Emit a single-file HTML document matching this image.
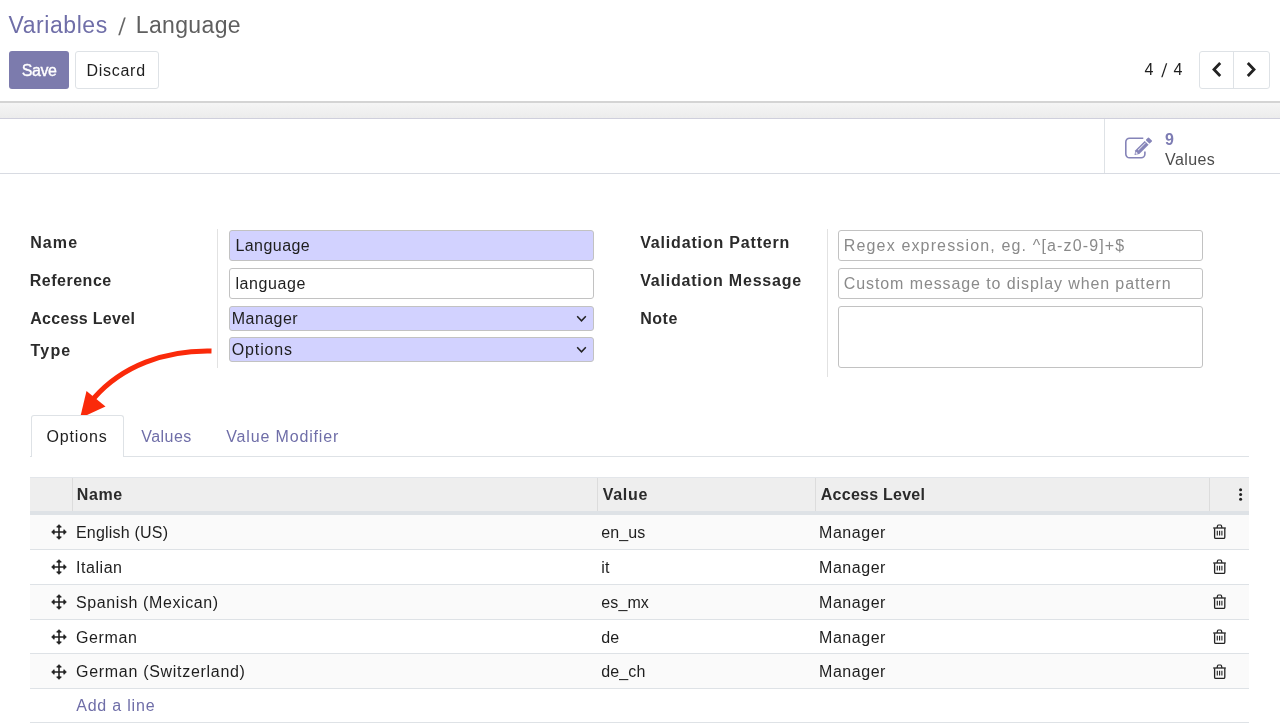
<!DOCTYPE html>
<html><head><meta charset="utf-8">
<style>
html,body{margin:0;padding:0;background:#fff;}
body{width:1280px;height:723px;position:relative;overflow:hidden;font-family:"Liberation Sans",sans-serif;}
.t{position:absolute;white-space:nowrap;}
#root{position:absolute;left:0;top:0;width:1280px;height:723px;will-change:transform;}
.b{position:absolute;}
</style></head><body>
<div id="root">
<div class="t" style="left:8.6px;top:13.83px;font-size:23px;line-height:23px;font-weight:normal;color:#6f6ea8;letter-spacing:0.55px;">Variables</div>
<div class="t" style="left:118.3px;top:16.78px;font-size:22px;line-height:22px;font-weight:normal;color:#666;letter-spacing:0px;transform:scaleY(1.1) skewX(-5deg);transform-origin:50% 100%;">/</div>
<div class="t" style="left:135.8px;top:13.83px;font-size:23px;line-height:23px;font-weight:normal;color:#5f5f5f;letter-spacing:0.35px;">Language</div>
<div class="b" style="left:9px;top:51px;width:60px;height:38px;background:#7C7BAD;border-radius:3px;"></div>
<div class="t" style="left:21.7px;top:63.36px;font-size:16px;line-height:16px;font-weight:normal;color:#fff;letter-spacing:-0.4px;-webkit-text-stroke:0.35px #fff;">Save</div>
<div class="b" style="left:75px;top:51px;width:84px;height:38px;background:#fff;border:1px solid #dee2e6;border-radius:3px;box-sizing:border-box;"></div>
<div class="t" style="left:86.6px;top:62.56px;font-size:16px;line-height:16px;font-weight:normal;color:#1e1e1e;letter-spacing:0.7px;">Discard</div>
<div class="t" style="left:1144.5px;top:62.21px;font-size:16px;line-height:16px;font-weight:normal;color:#1e1e1e;letter-spacing:0px;">4</div>
<div class="t" style="left:1160.5px;top:62.51px;font-size:17px;line-height:17px;font-weight:normal;color:#1e1e1e;letter-spacing:0px;transform:scaleY(1.12) skewX(-6deg);transform-origin:50% 100%;">/</div>
<div class="t" style="left:1173.6px;top:62.21px;font-size:16px;line-height:16px;font-weight:normal;color:#1e1e1e;letter-spacing:0px;">4</div>
<div class="b" style="left:1198.5px;top:51px;width:71px;height:38px;background:#fff;border:1px solid #dee2e6;border-radius:3px;box-sizing:border-box;"></div>
<div class="b" style="left:1233px;top:51px;width:1px;height:38px;background:#dee2e6;"></div>
<svg class="b" style="left:1210px;top:61px" width="14" height="17" viewBox="0 0 14 17"><path d="M10.2 2 L4 8.5 L10.2 15" fill="none" stroke="#222" stroke-width="2.8" stroke-linecap="butt" stroke-linejoin="miter"/></svg>
<svg class="b" style="left:1244px;top:61px" width="14" height="17" viewBox="0 0 14 17"><path d="M3.8 2 L10 8.5 L3.8 15" fill="none" stroke="#222" stroke-width="2.8" stroke-linecap="butt" stroke-linejoin="miter"/></svg>
<div class="b" style="left:0px;top:101px;width:1280px;height:2px;background:#d4d4d4;"></div>
<div class="b" style="left:0px;top:103px;width:1280px;height:15px;background:linear-gradient(#f5f5f5,#ececec);"></div>
<div class="b" style="left:0px;top:118px;width:1280px;height:1px;background:#cfcfdc;"></div>
<div class="b" style="left:0px;top:173px;width:1280px;height:1px;background:#d8dbe2;"></div>
<div class="b" style="left:1104px;top:119px;width:1px;height:54px;background:#dee2e6;"></div>
<svg class="b" style="left:1120px;top:130px" width="40" height="35" viewBox="0 0 40 35">
<path d="M23.3 8.2 H9.5 A3.7 3.7 0 0 0 5.8 11.9 V24.1 A3.7 3.7 0 0 0 9.5 27.8 H21.2 A3.7 3.7 0 0 0 24.9 24.1 V21.6" fill="none" stroke="#8584b8" stroke-width="1.6"/>
<g transform="translate(14.5 25) rotate(-45)">
<path d="M0 0 L4 -2.75 H17.2 V2.75 H4 Z" fill="#8584b8"/>
<rect x="18.5" y="-2.75" width="4" height="5.5" rx="0.7" fill="#8584b8"/>
<rect x="6" y="-1.3" width="10.5" height="0.8" fill="#fff" opacity="0.8"/>
<path d="M1.8 -0.9 L3.6 -0.9 L3.6 1.1 L1.8 1.1Z" fill="#fff" opacity="0.8"/>
</g></svg>
<div class="t" style="left:1165px;top:131.66px;font-size:16px;line-height:16px;font-weight:bold;color:#7d7cb3;letter-spacing:0px;">9</div>
<div class="t" style="left:1165px;top:152.06px;font-size:16px;line-height:16px;font-weight:normal;color:#4c4c4c;letter-spacing:0.4px;">Values</div>
<div class="t" style="left:30.2px;top:234.71px;font-size:16px;line-height:16px;font-weight:bold;color:#2b2b2b;letter-spacing:1.1px;">Name</div>
<div class="t" style="left:29.8px;top:273.46px;font-size:16px;line-height:16px;font-weight:bold;color:#2b2b2b;letter-spacing:0.5px;">Reference</div>
<div class="t" style="left:30.2px;top:310.71px;font-size:16px;line-height:16px;font-weight:bold;color:#2b2b2b;letter-spacing:0.3px;">Access Level</div>
<div class="t" style="left:30.5px;top:343.06px;font-size:16px;line-height:16px;font-weight:bold;color:#2b2b2b;letter-spacing:1.2px;">Type</div>
<div class="b" style="left:217px;top:229px;width:1px;height:139px;background:#e2e2e2;"></div>
<div class="b" style="left:827px;top:229px;width:1px;height:148px;background:#e2e2e2;"></div>
<div class="b" style="left:229px;top:230px;width:365px;height:31px;background:#d2d2ff;border:1px solid #c2c2c2;border-radius:3px;box-sizing:border-box;"></div>
<div class="t" style="left:235.4px;top:238.16px;font-size:16px;line-height:16px;font-weight:normal;color:#1e1e1e;letter-spacing:0.45px;">Language</div>
<div class="b" style="left:229px;top:268px;width:365px;height:31px;background:#fff;border:1px solid #c2c2c2;border-radius:3px;box-sizing:border-box;"></div>
<div class="t" style="left:235.4px;top:276.16px;font-size:16px;line-height:16px;font-weight:normal;color:#1e1e1e;letter-spacing:0.6px;">language</div>
<div class="b" style="left:229px;top:306px;width:365px;height:24.5px;background:#d2d2ff;border:1px solid #c2c2c2;border-radius:3px;box-sizing:border-box;"></div>
<div class="t" style="left:231.8px;top:311.16px;font-size:16px;line-height:16px;font-weight:normal;color:#1e1e1e;letter-spacing:0.45px;">Manager</div>
<div class="b" style="left:229px;top:337px;width:365px;height:24.5px;background:#d2d2ff;border:1px solid #c2c2c2;border-radius:3px;box-sizing:border-box;"></div>
<div class="t" style="left:231.8px;top:342.26px;font-size:16px;line-height:16px;font-weight:normal;color:#1e1e1e;letter-spacing:0.85px;">Options</div>
<svg class="b" style="left:576px;top:315px" width="11" height="8" viewBox="0 0 11 8"><path d="M1.2 1.2 L5.5 5.8 L9.8 1.2" fill="none" stroke="#222" stroke-width="1.5"/></svg>
<svg class="b" style="left:576px;top:346px" width="11" height="8" viewBox="0 0 11 8"><path d="M1.2 1.2 L5.5 5.8 L9.8 1.2" fill="none" stroke="#222" stroke-width="1.5"/></svg>
<div class="t" style="left:640.25px;top:234.56px;font-size:16px;line-height:16px;font-weight:bold;color:#2b2b2b;letter-spacing:0.82px;">Validation Pattern</div>
<div class="t" style="left:640.25px;top:273.06px;font-size:16px;line-height:16px;font-weight:bold;color:#2b2b2b;letter-spacing:0.78px;">Validation Message</div>
<div class="t" style="left:640.25px;top:311.46px;font-size:16px;line-height:16px;font-weight:bold;color:#2b2b2b;letter-spacing:0.5px;">Note</div>
<div class="b" style="left:838px;top:229.5px;width:365px;height:31px;background:#fff;border:1px solid #c2c2c2;border-radius:3px;box-sizing:border-box;"></div>
<div class="t" style="left:843.8px;top:238.16px;font-size:16px;line-height:16px;font-weight:normal;color:#8a8a8a;letter-spacing:1.15px;">Regex expression, eg. ^[a-z0-9]+$</div>
<div class="b" style="left:838px;top:268px;width:365px;height:31px;background:#fff;border:1px solid #c2c2c2;border-radius:3px;box-sizing:border-box;"></div>
<div class="t" style="left:843.8px;top:276.16px;font-size:16px;line-height:16px;font-weight:normal;color:#8a8a8a;letter-spacing:0.9px;">Custom message to display when pattern</div>
<div class="b" style="left:838px;top:306px;width:365px;height:62px;background:#fff;border:1px solid #c2c2c2;border-radius:3px;box-sizing:border-box;"></div>
<svg class="b" style="left:0;top:0" width="300" height="460" viewBox="0 0 300 460">
<path d="M211.5 351 C165 350 122 366 94 398" fill="none" stroke="#fa2a0a" stroke-width="5"/>
<path d="M80 418.3 L86.5 391 L105.5 406.5 Z" fill="#fa2a0a"/>
</svg>
<div class="b" style="left:30px;top:456px;width:1219px;height:1px;background:#dee2e6;"></div>
<div class="b" style="left:30.5px;top:415px;width:93.5px;height:42px;background:#fff;border:1px solid #dee2e6;border-bottom:none;border-radius:3px 3px 0 0;box-sizing:border-box;"></div>
<div class="t" style="left:46.5px;top:428.86px;font-size:16px;line-height:16px;font-weight:normal;color:#1e1e1e;letter-spacing:0.85px;">Options</div>
<div class="t" style="left:141.3px;top:428.76px;font-size:16px;line-height:16px;font-weight:normal;color:#6f6ea8;letter-spacing:0.45px;">Values</div>
<div class="t" style="left:226.2px;top:428.76px;font-size:16px;line-height:16px;font-weight:normal;color:#6f6ea8;letter-spacing:0.85px;">Value Modifier</div>
<div class="b" style="left:30px;top:477px;width:1219px;height:34px;background:#eeeeee;border-top:1px solid #e3e6ea;box-sizing:border-box;"></div>
<div class="b" style="left:30px;top:511px;width:1219px;height:4px;background:#dee2e6;"></div>
<div class="b" style="left:71.5px;top:478px;width:1px;height:33px;background:#dcdcdc;"></div>
<div class="b" style="left:596.5px;top:478px;width:1px;height:33px;background:#dcdcdc;"></div>
<div class="b" style="left:814.5px;top:478px;width:1px;height:33px;background:#dcdcdc;"></div>
<div class="b" style="left:1209px;top:478px;width:1px;height:33px;background:#dcdcdc;"></div>
<div class="t" style="left:76.7px;top:486.86px;font-size:16px;line-height:16px;font-weight:bold;color:#2b2b2b;letter-spacing:0.65px;">Name</div>
<div class="t" style="left:602.7px;top:486.86px;font-size:16px;line-height:16px;font-weight:bold;color:#2b2b2b;letter-spacing:0.7px;">Value</div>
<div class="t" style="left:820.8px;top:486.86px;font-size:16px;line-height:16px;font-weight:bold;color:#2b2b2b;letter-spacing:0.25px;">Access Level</div>
<svg class="b" style="left:1237px;top:487px" width="8" height="16" viewBox="0 0 8 16"><circle cx="3.6" cy="2.8" r="1.5" fill="#222"/><circle cx="3.6" cy="7.6" r="1.5" fill="#222"/><circle cx="3.6" cy="12.3" r="1.5" fill="#222"/></svg>
<div class="b" style="left:30px;top:515px;width:1219px;height:34px;background:#fafafa;"></div>
<div class="b" style="left:30px;top:549px;width:1219px;height:1px;background:#dee2e6;"></div>
<div class="t" style="left:76px;top:525.26px;font-size:16px;line-height:16px;font-weight:normal;color:#1e1e1e;letter-spacing:0.2px;">English (US)</div>
<div class="t" style="left:601.3px;top:525.26px;font-size:16px;line-height:16px;font-weight:normal;color:#1e1e1e;letter-spacing:0.1px;">en_us</div>
<div class="t" style="left:819px;top:525.26px;font-size:16px;line-height:16px;font-weight:normal;color:#1e1e1e;letter-spacing:0.55px;">Manager</div>
<svg class="b" style="left:49px;top:522.40px" width="20" height="20" viewBox="-10 -10 20 20">
<path d="M0 -6 V6 M-6 0 H6" stroke="#222" stroke-width="1.6"/>
<path d="M0 -7.3 L-2.3 -4.9 H2.3Z M0 7.3 L-2.3 4.9 H2.3Z M-7.3 0 L-4.9 -2.3 V2.3Z M7.3 0 L4.9 -2.3 V2.3Z" fill="#222" stroke="#222" stroke-width="1" stroke-linejoin="round"/>
</svg>
<svg class="b" style="left:1210px;top:522.40px" width="20" height="20" viewBox="0 0 20 20">
<path d="M3.2 6 H15.8" stroke="#222" stroke-width="1.3"/>
<path d="M7 6 L7.6 3.7 Q7.8 3 8.6 3 H10.4 Q11.2 3 11.4 3.7 L12 6" fill="none" stroke="#222" stroke-width="1.2"/>
<path d="M4.6 6.3 V15.2 Q4.6 16.4 5.8 16.4 H13.6 Q14.8 16.4 14.8 15.2 V6.3" fill="none" stroke="#222" stroke-width="1.3"/>
<path d="M7.3 8.7 V13.6 M9.6 8.7 V13.6 M11.9 8.7 V13.6" stroke="#222" stroke-width="1.1"/>
</svg>
<div class="b" style="left:30px;top:550px;width:1219px;height:34px;background:#ffffff;"></div>
<div class="b" style="left:30px;top:584px;width:1219px;height:1px;background:#dee2e6;"></div>
<div class="t" style="left:76px;top:560.06px;font-size:16px;line-height:16px;font-weight:normal;color:#1e1e1e;letter-spacing:0.55px;">Italian</div>
<div class="t" style="left:601.3px;top:560.06px;font-size:16px;line-height:16px;font-weight:normal;color:#1e1e1e;letter-spacing:0.1px;">it</div>
<div class="t" style="left:819px;top:560.06px;font-size:16px;line-height:16px;font-weight:normal;color:#1e1e1e;letter-spacing:0.55px;">Manager</div>
<svg class="b" style="left:49px;top:557.20px" width="20" height="20" viewBox="-10 -10 20 20">
<path d="M0 -6 V6 M-6 0 H6" stroke="#222" stroke-width="1.6"/>
<path d="M0 -7.3 L-2.3 -4.9 H2.3Z M0 7.3 L-2.3 4.9 H2.3Z M-7.3 0 L-4.9 -2.3 V2.3Z M7.3 0 L4.9 -2.3 V2.3Z" fill="#222" stroke="#222" stroke-width="1" stroke-linejoin="round"/>
</svg>
<svg class="b" style="left:1210px;top:557.20px" width="20" height="20" viewBox="0 0 20 20">
<path d="M3.2 6 H15.8" stroke="#222" stroke-width="1.3"/>
<path d="M7 6 L7.6 3.7 Q7.8 3 8.6 3 H10.4 Q11.2 3 11.4 3.7 L12 6" fill="none" stroke="#222" stroke-width="1.2"/>
<path d="M4.6 6.3 V15.2 Q4.6 16.4 5.8 16.4 H13.6 Q14.8 16.4 14.8 15.2 V6.3" fill="none" stroke="#222" stroke-width="1.3"/>
<path d="M7.3 8.7 V13.6 M9.6 8.7 V13.6 M11.9 8.7 V13.6" stroke="#222" stroke-width="1.1"/>
</svg>
<div class="b" style="left:30px;top:585px;width:1219px;height:34px;background:#fafafa;"></div>
<div class="b" style="left:30px;top:619px;width:1219px;height:1px;background:#dee2e6;"></div>
<div class="t" style="left:76px;top:594.86px;font-size:16px;line-height:16px;font-weight:normal;color:#1e1e1e;letter-spacing:0.6px;">Spanish (Mexican)</div>
<div class="t" style="left:601.3px;top:594.86px;font-size:16px;line-height:16px;font-weight:normal;color:#1e1e1e;letter-spacing:0.1px;">es_mx</div>
<div class="t" style="left:819px;top:594.86px;font-size:16px;line-height:16px;font-weight:normal;color:#1e1e1e;letter-spacing:0.55px;">Manager</div>
<svg class="b" style="left:49px;top:592.00px" width="20" height="20" viewBox="-10 -10 20 20">
<path d="M0 -6 V6 M-6 0 H6" stroke="#222" stroke-width="1.6"/>
<path d="M0 -7.3 L-2.3 -4.9 H2.3Z M0 7.3 L-2.3 4.9 H2.3Z M-7.3 0 L-4.9 -2.3 V2.3Z M7.3 0 L4.9 -2.3 V2.3Z" fill="#222" stroke="#222" stroke-width="1" stroke-linejoin="round"/>
</svg>
<svg class="b" style="left:1210px;top:592.00px" width="20" height="20" viewBox="0 0 20 20">
<path d="M3.2 6 H15.8" stroke="#222" stroke-width="1.3"/>
<path d="M7 6 L7.6 3.7 Q7.8 3 8.6 3 H10.4 Q11.2 3 11.4 3.7 L12 6" fill="none" stroke="#222" stroke-width="1.2"/>
<path d="M4.6 6.3 V15.2 Q4.6 16.4 5.8 16.4 H13.6 Q14.8 16.4 14.8 15.2 V6.3" fill="none" stroke="#222" stroke-width="1.3"/>
<path d="M7.3 8.7 V13.6 M9.6 8.7 V13.6 M11.9 8.7 V13.6" stroke="#222" stroke-width="1.1"/>
</svg>
<div class="b" style="left:30px;top:620px;width:1219px;height:33px;background:#ffffff;"></div>
<div class="b" style="left:30px;top:653px;width:1219px;height:1px;background:#dee2e6;"></div>
<div class="t" style="left:76px;top:629.56px;font-size:16px;line-height:16px;font-weight:normal;color:#1e1e1e;letter-spacing:0.6px;">German</div>
<div class="t" style="left:601.3px;top:629.56px;font-size:16px;line-height:16px;font-weight:normal;color:#1e1e1e;letter-spacing:0.1px;">de</div>
<div class="t" style="left:819px;top:629.56px;font-size:16px;line-height:16px;font-weight:normal;color:#1e1e1e;letter-spacing:0.55px;">Manager</div>
<svg class="b" style="left:49px;top:626.70px" width="20" height="20" viewBox="-10 -10 20 20">
<path d="M0 -6 V6 M-6 0 H6" stroke="#222" stroke-width="1.6"/>
<path d="M0 -7.3 L-2.3 -4.9 H2.3Z M0 7.3 L-2.3 4.9 H2.3Z M-7.3 0 L-4.9 -2.3 V2.3Z M7.3 0 L4.9 -2.3 V2.3Z" fill="#222" stroke="#222" stroke-width="1" stroke-linejoin="round"/>
</svg>
<svg class="b" style="left:1210px;top:626.70px" width="20" height="20" viewBox="0 0 20 20">
<path d="M3.2 6 H15.8" stroke="#222" stroke-width="1.3"/>
<path d="M7 6 L7.6 3.7 Q7.8 3 8.6 3 H10.4 Q11.2 3 11.4 3.7 L12 6" fill="none" stroke="#222" stroke-width="1.2"/>
<path d="M4.6 6.3 V15.2 Q4.6 16.4 5.8 16.4 H13.6 Q14.8 16.4 14.8 15.2 V6.3" fill="none" stroke="#222" stroke-width="1.3"/>
<path d="M7.3 8.7 V13.6 M9.6 8.7 V13.6 M11.9 8.7 V13.6" stroke="#222" stroke-width="1.1"/>
</svg>
<div class="b" style="left:30px;top:654px;width:1219px;height:34px;background:#fafafa;"></div>
<div class="b" style="left:30px;top:688px;width:1219px;height:1px;background:#dee2e6;"></div>
<div class="t" style="left:76px;top:664.46px;font-size:16px;line-height:16px;font-weight:normal;color:#1e1e1e;letter-spacing:0.7px;">German (Switzerland)</div>
<div class="t" style="left:601.3px;top:664.46px;font-size:16px;line-height:16px;font-weight:normal;color:#1e1e1e;letter-spacing:0.1px;">de_ch</div>
<div class="t" style="left:819px;top:664.46px;font-size:16px;line-height:16px;font-weight:normal;color:#1e1e1e;letter-spacing:0.55px;">Manager</div>
<svg class="b" style="left:49px;top:661.60px" width="20" height="20" viewBox="-10 -10 20 20">
<path d="M0 -6 V6 M-6 0 H6" stroke="#222" stroke-width="1.6"/>
<path d="M0 -7.3 L-2.3 -4.9 H2.3Z M0 7.3 L-2.3 4.9 H2.3Z M-7.3 0 L-4.9 -2.3 V2.3Z M7.3 0 L4.9 -2.3 V2.3Z" fill="#222" stroke="#222" stroke-width="1" stroke-linejoin="round"/>
</svg>
<svg class="b" style="left:1210px;top:661.60px" width="20" height="20" viewBox="0 0 20 20">
<path d="M3.2 6 H15.8" stroke="#222" stroke-width="1.3"/>
<path d="M7 6 L7.6 3.7 Q7.8 3 8.6 3 H10.4 Q11.2 3 11.4 3.7 L12 6" fill="none" stroke="#222" stroke-width="1.2"/>
<path d="M4.6 6.3 V15.2 Q4.6 16.4 5.8 16.4 H13.6 Q14.8 16.4 14.8 15.2 V6.3" fill="none" stroke="#222" stroke-width="1.3"/>
<path d="M7.3 8.7 V13.6 M9.6 8.7 V13.6 M11.9 8.7 V13.6" stroke="#222" stroke-width="1.1"/>
</svg>
<div class="t" style="left:76.2px;top:698.26px;font-size:16px;line-height:16px;font-weight:normal;color:#6f6ea8;letter-spacing:0.8px;">Add a line</div>
<div class="b" style="left:30px;top:722px;width:1219px;height:1px;background:#dee2e6;"></div>
</div></body></html>
